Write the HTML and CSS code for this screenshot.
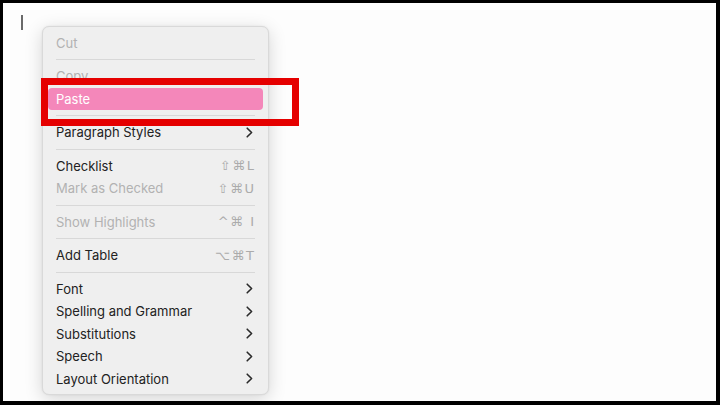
FILE: index.html
```html
<!DOCTYPE html>
<html>
<head>
<meta charset="utf-8">
<link rel="stylesheet" href="styles.css">
</head>
<body>
<div class="screen">
  <div class="caret"></div>
  <div class="menu">
    <div class="item off"><span class="label">Cut</span></div>
    <div class="sep"></div>
    <div class="item off"><span class="label">Copy</span></div>
    <div class="item hl"><span class="label">Paste</span></div>
    <div class="sep"></div>
    <div class="item"><span class="label">Paragraph Styles</span><svg class="chev" viewBox="0 0 7 11"><path d="M1.2 1.2 L5.6 5.5 L1.2 9.8"/></svg></div>
    <div class="sep"></div>
    <div class="item"><span class="label">Checklist</span><span class="key">⇧⌘L</span></div>
    <div class="item off"><span class="label">Mark as Checked</span><span class="key">⇧⌘U</span></div>
    <div class="sep"></div>
    <div class="item off"><span class="label">Show Highlights</span><span class="key">^⌘ I</span></div>
    <div class="sep"></div>
    <div class="item"><span class="label">Add Table</span><span class="key">⌥⌘T</span></div>
    <div class="sep"></div>
    <div class="item"><span class="label">Font</span><svg class="chev" viewBox="0 0 7 11"><path d="M1.2 1.2 L5.6 5.5 L1.2 9.8"/></svg></div>
    <div class="item"><span class="label">Spelling and Grammar</span><svg class="chev" viewBox="0 0 7 11"><path d="M1.2 1.2 L5.6 5.5 L1.2 9.8"/></svg></div>
    <div class="item"><span class="label">Substitutions</span><svg class="chev" viewBox="0 0 7 11"><path d="M1.2 1.2 L5.6 5.5 L1.2 9.8"/></svg></div>
    <div class="item"><span class="label">Speech</span><svg class="chev" viewBox="0 0 7 11"><path d="M1.2 1.2 L5.6 5.5 L1.2 9.8"/></svg></div>
    <div class="item"><span class="label">Layout Orientation</span><svg class="chev" viewBox="0 0 7 11"><path d="M1.2 1.2 L5.6 5.5 L1.2 9.8"/></svg></div>
  </div>
  <div class="callout"></div>
</div>
</body>
</html>
```

FILE: styles.css
```css
html, body {
  margin: 0;
  padding: 0;
}
body {
  background: #000;
  width: 720px;
  height: 405px;
  padding: 3px 4px 4px 3px;
  box-sizing: border-box;
  font-family: Inter, "Liberation Sans", sans-serif;
}
.screen {
  position: relative;
  background: #fdfdfd;
  height: 398px;
  padding: 23px 0 0 39px;
  box-sizing: border-box;
}
.caret {
  position: absolute;
  left: 18px;
  top: 12px;
  width: 1.5px;
  height: 15px;
  background: #6a6a6a;
}
.menu {
  width: 227px;
  height: 369px;
  box-sizing: border-box;
  background: #efefef;
  border: 1px solid #d9d9d9;
  border-radius: 7px;
  box-shadow: 0 4px 18px rgba(0, 0, 0, 0.16), 0 0 2px rgba(0, 0, 0, 0.08);
  padding: 4.5px 0 0;
}
.item {
  height: 22.5px;
  margin: 0 5px;
  padding: 0 9px 0 8px;
  display: flex;
  align-items: center;
  justify-content: space-between;
  font-size: 13px;
  color: #222;
  border-radius: 4px;
}
.item.off {
  color: #b2b2b2;
}
.item.hl {
  background: #f487ba;
  color: #fff;
}
.key {
  color: #ababab;
  font-family: "DejaVu Sans", sans-serif;
  font-size: 13px;
  letter-spacing: 1.5px;
  margin-right: -1.5px;
}
.chev {
  width: 7px;
  height: 11px;
  margin-right: 1px;
}
.chev path {
  fill: none;
  stroke: #2a2a2a;
  stroke-width: 1.6;
  stroke-linecap: round;
  stroke-linejoin: round;
}
.sep {
  height: 11px;
  margin: 0 13px;
  display: flex;
  align-items: center;
}
.sep::before {
  content: "";
  display: block;
  width: 100%;
  height: 1px;
  background: #d8d8d8;
}
.callout {
  position: absolute;
  left: 38px;
  top: 75px;
  width: 258px;
  height: 48px;
  box-sizing: border-box;
  border: 7px solid #e50000;
}
```
